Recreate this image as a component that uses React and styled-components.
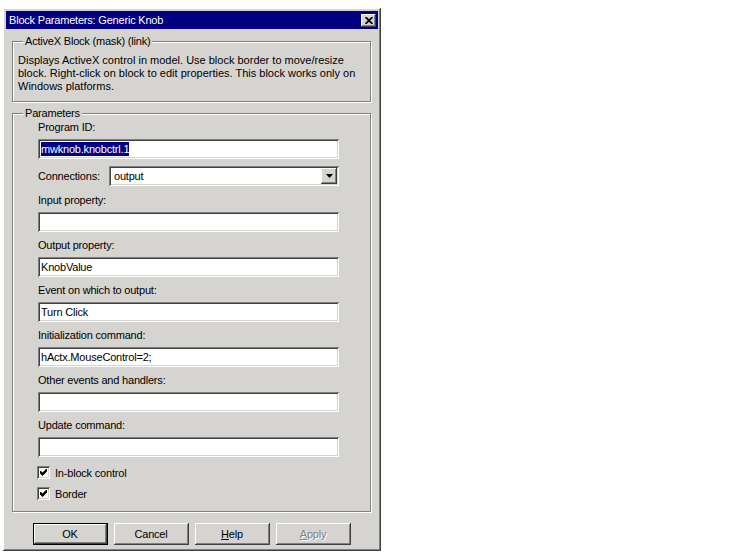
import styled, { createGlobalStyle, css } from "styled-components";

const face = "#d6d4d0";

const GlobalStyle = createGlobalStyle`
  html, body {
    margin: 0;
    padding: 0;
    background: #ffffff;
  }
  body {
    font-family: "Liberation Sans", Arial, sans-serif;
    font-size: 11px;
    letter-spacing: -0.2px;
    color: #000;
  }
`;

const raised = css`
  box-shadow: inset -1px -1px #404040, inset 1px 1px #ffffff,
    inset -2px -2px #808080, inset 2px 2px ${face};
`;

const sunken = css`
  box-shadow: inset 1px 1px #808080, inset -1px -1px #ffffff,
    inset 2px 2px #404040, inset -2px -2px ${face};
`;

const Window = styled.div`
  margin: 8px 0 0 3px;
  width: 378px;
  height: 543px;
  box-sizing: border-box;
  padding: 3px;
  background: ${face};
  ${raised};
  display: flex;
  flex-direction: column;
`;

const TitleBar = styled.div`
  height: 18px;
  flex: none;
  background: #000080;
  color: #ffffff;
  display: flex;
  align-items: center;
  justify-content: space-between;
  padding: 0 2px 0 3px;

  span {
    line-height: 18px;
  }
`;

const CloseButton = styled.div`
  width: 15px;
  height: 13px;
  box-sizing: border-box;
  background: ${face};
  ${raised};
  display: flex;
  align-items: center;
  justify-content: center;
`;

const Body = styled.div`
  padding: 0 7px 0 6px;
  display: flex;
  flex-direction: column;
`;

const Group = styled.div`
  margin-top: ${(p) => p.$top}px;
  border: 1px solid #808080;
  box-shadow: 1px 1px 0 #ffffff, inset 1px 1px 0 #ffffff;
  padding: 0 6px ${(p) => p.$bottom}px 5px;
  display: flex;
  flex-direction: column;
`;

const Caption = styled.div`
  align-self: flex-start;
  margin: -7px 0 0 5px;
  padding: 0 2px;
  line-height: 13px;
  background: ${face};
`;

const Description = styled.p`
  margin: 6px 0 0;
  line-height: 13px;
  letter-spacing: 0;
`;

const Fields = styled.div`
  padding-left: 20px;
  display: flex;
  flex-direction: column;
`;

const Label = styled.div`
  margin-top: ${(p) => p.$top}px;
  line-height: 13px;
  height: 13px;
`;

const TextBox = styled.div`
  margin-top: 5px;
  width: 301px;
  height: 20px;
  box-sizing: border-box;
  padding: 0 3px;
  background: #ffffff;
  ${sunken};
  display: flex;
  align-items: center;
  white-space: nowrap;
`;

const Selected = styled.span`
  background: #000080;
  color: #ffffff;
  line-height: 14px;
`;

const SelectRow = styled.div`
  margin-top: 7px;
  display: flex;
  align-items: center;
`;

const SelectLabel = styled.div`
  width: 71px;
  line-height: 13px;
`;

const Select = styled.div`
  width: 230px;
  height: 20px;
  box-sizing: border-box;
  padding: 2px 2px 2px 5px;
  background: #ffffff;
  ${sunken};
  display: flex;
  align-items: center;
  justify-content: space-between;
`;

const DropButton = styled.div`
  width: 16px;
  height: 16px;
  box-sizing: border-box;
  background: ${face};
  ${raised};
  display: flex;
  align-items: center;
  justify-content: center;
`;

const CheckRow = styled.div`
  margin-top: ${(p) => p.$top}px;
  margin-left: -1px;
  height: 13px;
  display: flex;
  align-items: center;
  gap: 5px;
`;

const CheckBox = styled.div`
  width: 13px;
  height: 13px;
  box-sizing: border-box;
  background: #ffffff;
  ${sunken};
  display: flex;
  align-items: center;
  justify-content: center;
`;

const ButtonRow = styled.div`
  margin-top: 11px;
  display: flex;
  justify-content: center;
  gap: 6px;
`;

const Button = styled.div`
  width: 75px;
  height: 22px;
  box-sizing: border-box;
  background: ${face};
  display: flex;
  align-items: center;
  justify-content: center;
  ${raised};
  ${(p) =>
    p.$default &&
    css`
      border: 1px solid #000000;
    `}
  ${(p) =>
    p.$disabled &&
    css`
      color: #808080;
      text-shadow: 1px 1px 0 #ffffff;
    `}
`;

function Check() {
  return (
    <svg width="7" height="7" viewBox="0 0 7 7">
      <polygon points="0,2 1,2 2.5,3.5 6,0 7,0 7,2.5 2.5,7 0,4.5" fill="#000" />
    </svg>
  );
}

const fields = [
  ["Input property:", ""],
  ["Output property:", "KnobValue"],
  ["Event on which to output:", "Turn Click"],
  ["Initialization command:", "hActx.MouseControl=2;"],
  ["Other events and handlers:", ""],
  ["Update command:", ""],
];

export default function App() {
  return (
    <>
      <GlobalStyle />
      <Window>
        <TitleBar>
          <span>{"Block Parameters: Generic Knob"}</span>
          <CloseButton>
            <svg width="8" height="7" viewBox="0 0 8 7">
              <path d="M0.5 0 L7.5 7 M7.5 0 L0.5 7" stroke="#000" strokeWidth="1.8" />
            </svg>
          </CloseButton>
        </TitleBar>
        <Body>
          <Group $top={12} $bottom={8}>
            <Caption>{"ActiveX Block (mask) (link)"}</Caption>
            <Description>
              {"Displays ActiveX control in model. Use block border to move/resize"}
              <br />
              {"block. Right-click on block to edit properties. This block works only on"}
              <br />
              {"Windows platforms."}
            </Description>
          </Group>

          <Group $top={11} $bottom={11}>
            <Caption>{"Parameters"}</Caption>
            <Fields>
              <Label $top={1}>{"Program ID:"}</Label>
              <TextBox>
                <Selected>{"mwknob.knobctrl.1"}</Selected>
              </TextBox>
              <SelectRow>
                <SelectLabel>{"Connections:"}</SelectLabel>
                <Select>
                  <span>{"output"}</span>
                  <DropButton>
                    <svg width="7" height="4" viewBox="0 0 7 4">
                      <polygon points="0,0 7,0 3.5,4" fill="#000" />
                    </svg>
                  </DropButton>
                </Select>
              </SelectRow>
              {fields.map(([label, value], i) => (
                <div key={label}>
                  <Label $top={i === 0 ? 8 : 7}>{label}</Label>
                  <TextBox>{value}</TextBox>
                </div>
              ))}
              <CheckRow $top={9}>
                <CheckBox>
                  <Check />
                </CheckBox>
                <span>{"In-block control"}</span>
              </CheckRow>
              <CheckRow $top={8}>
                <CheckBox>
                  <Check />
                </CheckBox>
                <span>{"Border"}</span>
              </CheckRow>
            </Fields>
          </Group>

          <ButtonRow>
            <Button $default>{"OK"}</Button>
            <Button>{"Cancel"}</Button>
            <Button>
              <span>
                <u>{"H"}</u>
                {"elp"}
              </span>
            </Button>
            <Button $disabled>
              <span>
                <u>{"A"}</u>
                {"pply"}
              </span>
            </Button>
          </ButtonRow>
        </Body>
      </Window>
    </>
  );
}
